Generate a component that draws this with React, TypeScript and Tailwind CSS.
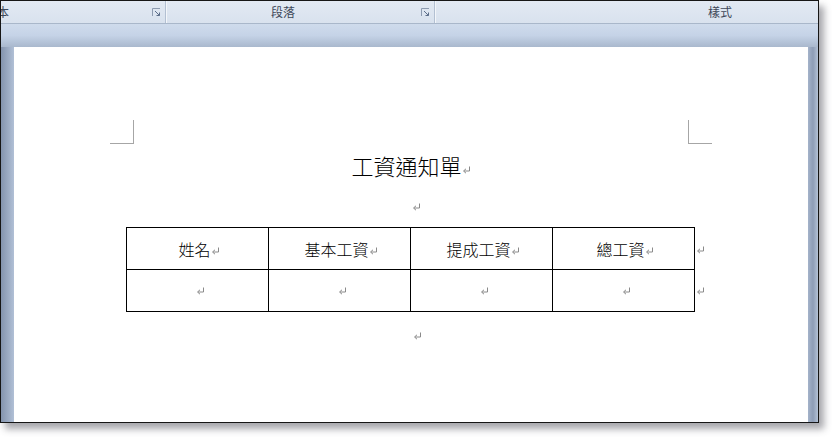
import React from "react";

const CJK = { fontFamily: '"Noto Sans CJK TC", "Noto Sans CJK SC", sans-serif' };

function ReturnMark({ className = "" }: { className?: string }) {
  return (
    <svg width="9" height="8" viewBox="0 0 9 8" className={`inline-block shrink-0 ${className}`}>
      <path d="M7.5 0.5 V5 H2" stroke="#8a8a8a" strokeWidth="1" fill="none" />
      <path d="M4 2.8 L1.5 5 L4 7.2" stroke="#8a8a8a" strokeWidth="1" fill="none" />
    </svg>
  );
}

function Launcher() {
  return (
    <svg width="9" height="9" viewBox="0 0 9 9" className="shrink-0">
      <path d="M0.5 8 V0.5 H8" stroke="#8d9bb0" strokeWidth="1" fill="none" />
      <path d="M3 3 L7.5 7.5 M4.5 7.5 H7.5 V4.5" stroke="#5d6f8a" strokeWidth="1" fill="none" />
    </svg>
  );
}

function Separator() {
  return (
    <div className="flex h-full shrink-0">
      <div className="w-px bg-[#b3c0d2]" />
      <div className="w-px bg-[#f3f6fa]" />
    </div>
  );
}

function CornerMark({ side }: { side: "left" | "right" }) {
  return (
    <div
      className={`w-[24px] h-[24px] border-b border-[#a6a6a6] ${
        side === "left" ? "border-r" : "border-l"
      }`}
    />
  );
}

const headers = ["姓名", "基本工資", "提成工資", "總工資"];

export default function App() {
  return (
    <div className="w-[840px] h-[443px] bg-white overflow-hidden" style={CJK}>
      <div className="w-[819px] h-[423px] border border-[#161616] flex flex-col shadow-[5px_6px_7px_rgba(60,60,70,0.45)]">
        {/* ribbon group labels */}
        <div className="h-[23px] shrink-0 flex bg-gradient-to-b from-[#e2e9f3] to-[#d9e2ee] border-b border-[#a9b7ca] text-[12px] text-[#3e4859]">
          <div className="w-[164px] flex items-center justify-between pr-[4px] overflow-hidden">
            <span className="-ml-[4px] leading-none">本</span>
            <Launcher />
          </div>
          <Separator />
          <div className="w-[267px] flex items-center pr-[4px]">
            <span className="flex-1 text-center leading-none pr-[22px]">段落</span>
            <Launcher />
          </div>
          <Separator />
          <div className="flex-1 flex items-center">
            <span className="leading-none pl-[272px]">樣式</span>
          </div>
        </div>

        {/* document area */}
        <div className="flex-1 flex flex-col bg-[#c3d1e6] min-h-0">
          <div className="h-[23px] shrink-0 bg-gradient-to-b from-[#cfdbec] via-[#c5d3e7] to-[#a9b8cd]" />
          <div className="flex-1 flex min-h-0">
            <div className="w-[13px] shrink-0 bg-gradient-to-r from-[#8494ae] to-[#b1c0d6]" />
            <div className="w-[794px] shrink-0 bg-white flex flex-col items-center">
              <div className="w-full flex justify-between pl-[96px] pr-[96px] pt-[73px]">
                <CornerMark side="left" />
                <CornerMark side="right" />
              </div>

              <div className="w-[555px] flex justify-center items-end mt-[5px] h-[27px] text-[22px] leading-none text-black font-light">
                <span>工資通知單</span>
                <ReturnMark className="mb-[2px]" />
              </div>

              <div className="w-[555px] flex justify-center h-[18px] items-end mt-[17px] pl-[10px]">
                <ReturnMark />
              </div>

              <div className="flex items-start mt-[16px] pl-[8px]">
                <div className="grid grid-cols-[142px_142px_142px_142px] border-l border-t border-black">
                  {headers.map((h) => (
                    <div
                      key={h}
                      className="h-[42px] border-r border-b border-black flex items-center justify-center pl-[4px] text-[16px] leading-none text-black font-light"
                    >
                      <span>{h}</span>
                      <ReturnMark className="mt-[4px]" />
                    </div>
                  ))}
                  {headers.map((h) => (
                    <div
                      key={h + "-v"}
                      className="h-[42px] border-r border-b border-black flex items-center justify-center pl-[6px]"
                    >
                      <ReturnMark />
                    </div>
                  ))}
                </div>
                <div className="flex flex-col pl-[1px]">
                  <div className="h-[43px] flex items-center pt-[2px]">
                    <ReturnMark />
                  </div>
                  <div className="h-[42px] flex items-center">
                    <ReturnMark />
                  </div>
                </div>
              </div>

              <div className="w-[555px] flex justify-center mt-[20px] pl-[12px]">
                <ReturnMark />
              </div>
            </div>
            <div className="flex-1 bg-gradient-to-r from-[#a4b3ca] via-[#8e9db6] to-[#b4c2d6]" />
          </div>
        </div>
      </div>
    </div>
  );
}
